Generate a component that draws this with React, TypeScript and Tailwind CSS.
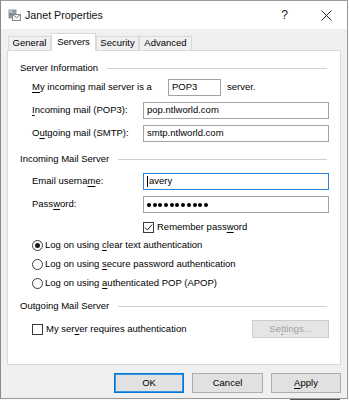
import { ReactNode } from "react";

// Windows-style "Properties" dialog, Servers tab selected.

function U({ children }: { children: ReactNode }) {
  return <span className="underline decoration-[1px] underline-offset-[1.5px]">{children}</span>;
}

function Section({ title }: { title: string }) {
  return (
    <div className="flex h-[12px] items-center">
      <span className="whitespace-nowrap">{title}</span>
      <div className="mr-[2px] ml-[9px] h-px flex-1 bg-[#cfcfcf]" />
    </div>
  );
}

function Box({ children, focused }: { children?: ReactNode; focused?: boolean }) {
  return (
    <div
      className={
        focused
          ? "flex h-[17px] flex-1 items-center border border-[#2f86d8] bg-white pl-[3px]"
          : "flex h-[17px] flex-1 items-center border border-[#a3a3a3] bg-white pl-[3px]"
      }
    >
      {children}
    </div>
  );
}

function Radio({ checked, children }: { checked?: boolean; children: ReactNode }) {
  return (
    <div className="flex h-[19px] items-center gap-[2px] pl-[12px]">
      <div className="flex h-[11px] w-[11px] items-center justify-center rounded-full border border-[#3a3a3a] bg-white">
        {checked && <div className="h-[5px] w-[5px] rounded-full bg-[#1a1a1a]" />}
      </div>
      <span>{children}</span>
    </div>
  );
}

function Check({ checked }: { checked?: boolean }) {
  return (
    <div className="flex h-[11px] w-[11px] shrink-0 items-center justify-center border border-[#3a3a3a] bg-white">
      {checked && (
        <svg width="9" height="9" viewBox="0 0 9 9">
          <path d="M1 4.6 L3.4 7 L8 1.6" fill="none" stroke="#1a1a1a" strokeWidth="1" />
        </svg>
      )}
    </div>
  );
}

function Tab({ label, active }: { label: string; active?: boolean }) {
  if (active) {
    return (
      <div className="relative z-10 flex h-[18px] w-[45px] items-center justify-center border-x border-t border-[#d9d9d9] bg-white pb-px">
        {label}
      </div>
    );
  }
  return (
    <div className="flex h-[15px] items-center justify-center border-t border-l border-[#d9d9d9] bg-[#f0f0f0] pb-[2px] last:border-r">
      {label}
    </div>
  );
}

function Button({ children, primary, w }: { children: ReactNode; primary?: boolean; w: string }) {
  return (
    <div
      className={
        (primary
          ? "border border-[#0078d7] shadow-[inset_0_0_0_1px_#3f95dd] "
          : "border border-[#adadad] ") +
        w +
        " flex h-[20px] items-center justify-center bg-[#e1e1e1]"
      }
    >
      {children}
    </div>
  );
}

export default function App() {
  return (
    <div className="h-[400px] w-[349px] overflow-hidden bg-[#fafafa] font-['Liberation_Sans',Arial,sans-serif] text-[9.5px] text-black">
      <div className="flex h-[399px] w-[348px] flex-col border border-b-[#9a9a9a] border-l-[#8a8a8a] border-r-[#9a9a9a] border-t-[#9a9a9a] bg-[#f0f0f0]">
        {/* title bar */}
        <div className="flex h-[28px] shrink-0 items-center bg-white">
          <svg className="ml-[7px]" width="13" height="12" viewBox="0 0 13 12">
            <rect x="0.5" y="0.5" width="8" height="9" fill="#8d9aa5" />
            <rect x="1.5" y="1.5" width="3" height="2" fill="#c9d1d7" />
            <rect x="1.5" y="5" width="5" height="1" fill="#5d6a75" />
            <rect x="4.5" y="5.5" width="8" height="6" fill="#f4f4f4" stroke="#8a8a8a" />
            <path d="M4.5 5.5 L8.5 8.5 L12.5 5.5" fill="none" stroke="#8a8a8a" />
          </svg>
          <span className="ml-[4px] text-[10.7px] text-[#111]">Janet Properties</span>
          <span className="ml-auto mr-[33px] text-[12px] font-light text-[#222]">?</span>
          <svg className="mr-[15px]" width="11" height="11" viewBox="0 0 11 11">
            <path d="M0.5 0.5 L10.5 10.5 M10.5 0.5 L0.5 10.5" stroke="#222" strokeWidth="1" />
          </svg>
        </div>

        {/* body */}
        <div className="flex flex-1 flex-col pr-[6px] pl-[6px]">
          <div className="flex h-[22px] items-end pl-px">
            <div className="w-[43px]">
              <Tab label="General" />
            </div>
            <Tab label="Servers" active />
            <div className="w-[43px]">
              <Tab label="Security" />
            </div>
            <div className="flex w-[53px] flex-col">
              <div className="flex h-[15px] items-center justify-center border-x border-t border-[#d9d9d9] pb-[2px]">
                Advanced
              </div>
            </div>
          </div>

          <div className="-mt-px flex h-[315px] flex-col border border-[#d9d9d9] bg-white pt-[11px] pr-[11px] pl-[12px]">
            <Section title="Server Information" />
            <div className="mt-[5px] flex h-[17px] items-center pl-[12px]">
              <span className="w-[136px] shrink-0">
                <U>M</U>y incoming mail server is a
              </span>
              <div className="flex h-[17px] w-[53px] items-center border border-[#a3a3a3] pl-[3px]">POP3</div>
              <span className="ml-[6px]">server.</span>
            </div>
            <div className="mt-[6px] flex h-[17px] items-center pl-[12px]">
              <span className="w-[111px] shrink-0">
                <U>I</U>ncoming mail (POP3):
              </span>
              <Box>pop.ntlworld.com</Box>
            </div>
            <div className="mt-[6px] flex h-[17px] items-center pl-[12px]">
              <span className="w-[111px] shrink-0">
                O<U>u</U>tgoing mail (SMTP):
              </span>
              <Box>smtp.ntlworld.com</Box>
            </div>

            <div className="mt-[11px]">
              <Section title="Incoming Mail Server" />
            </div>
            <div className="mt-[8px] flex h-[17px] items-center pl-[12px]">
              <span className="w-[111px] shrink-0">
                Email userna<U>m</U>e:
              </span>
              <Box focused>
                <div className="mr-px h-[11px] w-px bg-black" />
                avery
              </Box>
            </div>
            <div className="mt-[6px] flex h-[17px] items-center pl-[12px]">
              <span className="w-[111px] shrink-0">
                Pass<U>w</U>ord:
              </span>
              <Box>
                <div className="flex gap-[1.7px]">
                  {Array.from({ length: 11 }).map((_, i) => (
                    <div key={i} className="h-[4px] w-[4px] rounded-full bg-black" />
                  ))}
                </div>
              </Box>
            </div>
            <div className="mt-[8px] flex h-[13px] items-center gap-[3px] pl-[123px]">
              <Check checked />
              <span>
                Remember pass<U>w</U>ord
              </span>
            </div>

            <div className="mt-[2px]">
              <Radio checked>
                Log on using <U>c</U>lear text authentication
              </Radio>
              <Radio>
                Log on using <U>s</U>ecure password authentication
              </Radio>
              <Radio>
                Log on using <U>a</U>uthenticated POP (APOP)
              </Radio>
            </div>

            <div className="mt-[7px]">
              <Section title="Outgoing Mail Server" />
            </div>
            <div className="mt-[8px] flex h-[18px] items-center pl-[12px]">
              <Check />
              <span className="ml-[3px]">
                My ser<U>v</U>er requires authentication
              </span>
              <div className="ml-auto flex h-[18px] w-[77px] items-center justify-center border border-[#cccccc] bg-[#e5e5e5] text-[#a0a0a0]">
                Se<U>t</U>tings...
              </div>
            </div>
          </div>

          <div className="mt-[8px] flex justify-end gap-[8px]">
            <Button primary w="w-[70px]">OK</Button>
            <Button w="w-[71px]">Cancel</Button>
            <Button w="w-[70px]">
              <U>A</U>pply
            </Button>
          </div>
        </div>
      </div>
      <div className="flex h-px">
        <div className="ml-[290px] h-px w-[50px] bg-[#555]" />
      </div>
    </div>
  );
}
